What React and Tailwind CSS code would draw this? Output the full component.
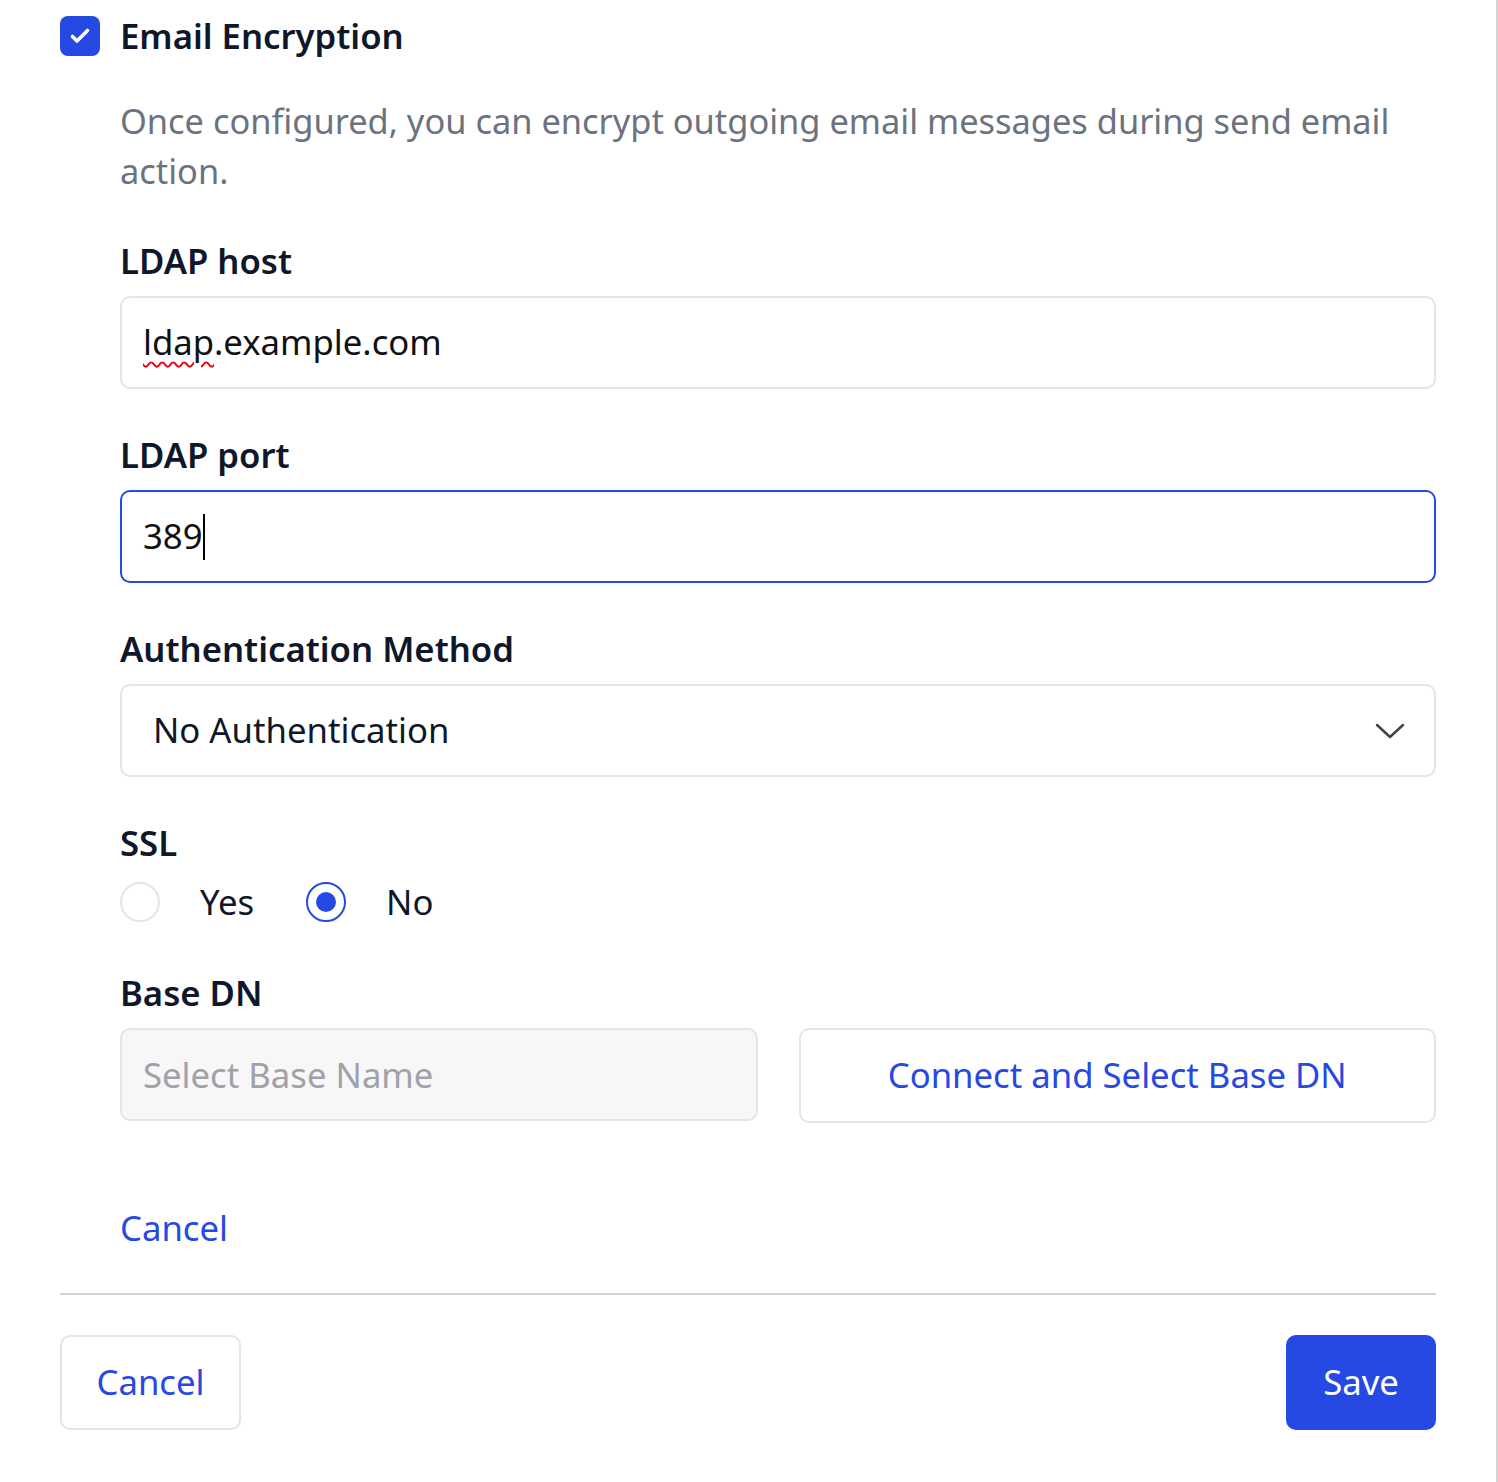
import React, { useState } from "react";

function Label({ children }) {
  return (
    <div className="text-[34.7px] leading-[44px] font-semibold text-[#0f172a] mb-[13px]">
      {children}
    </div>
  );
}

function Radio({ checked, label, onClick }) {
  return (
    <button onClick={onClick} className="flex items-center h-[44px]">
      <span
        className={
          checked
            ? "w-[40px] h-[40px] rounded-full border-2 border-[#2649e3] flex items-center justify-center"
            : "w-[40px] h-[40px] rounded-full border-2 border-[#e5e5e5] flex items-center justify-center"
        }
      >
        {checked && <span className="w-[20px] h-[20px] rounded-full bg-[#2649e3]" />}
      </span>
      <span className="ml-[40px] text-[34.7px] text-[#0f172a]">{label}</span>
    </button>
  );
}

export default function App() {
  const [ssl, setSsl] = useState(false);

  return (
    <div className="w-[1498px] h-[1482px] bg-white border-r-2 border-[#d4d4d8] font-['Noto_Sans',sans-serif] overflow-hidden">
      <div className="pl-[60px] pr-[60px] pt-[16px]">
        {/* checkbox heading */}
        <div className="flex items-center h-[40px]">
          <span className="w-[40px] h-[40px] rounded-[8px] bg-[#2649e3] flex items-center justify-center">
            <svg width="24" height="24" viewBox="0 0 24 24" fill="none">
              <path d="M4.5 12.5l4.5 4.5L19.5 6.5" stroke="white" strokeWidth="3.6" strokeLinecap="round" strokeLinejoin="round" />
            </svg>
          </span>
          <span className="ml-[20px] text-[34.7px] font-semibold text-[#0f172a]">Email Encryption</span>
        </div>

        <div className="pl-[60px]">
          <p className="mt-[40px] text-[34.4px] leading-[50px] text-[#6b7280]">
            Once configured, you can encrypt outgoing email messages during send email action.
          </p>

          <div className="mt-[43px]">
            <Label>LDAP host</Label>
            <div className="h-[93px] rounded-[10px] border-2 border-[#e5e5e5] flex items-center px-[21px] text-[34.7px] text-[#111]">
              <span className="underline decoration-wavy decoration-red-600 decoration-[1.5px] underline-offset-[6px]">ldap</span>
              <span>.example.com</span>
            </div>
          </div>

          <div className="mt-[44px]">
            <Label>LDAP port</Label>
            <div className="h-[93px] rounded-[10px] border-2 border-[#2649e3] flex items-center px-[21px] text-[34.7px] text-[#111]">
              <span>389</span>
              <span className="w-[2px] h-[46px] bg-black" />
            </div>
          </div>

          <div className="mt-[44px]">
            <Label>Authentication Method</Label>
            <div className="h-[93px] rounded-[10px] border-2 border-[#e5e5e5] flex items-center justify-between pl-[31px] pr-[28px] text-[34.7px] text-[#0f172a]">
              <span>No Authentication</span>
              <svg width="32" height="18" viewBox="0 0 32 18" fill="none">
                <path d="M3 3l13 12L29 3" stroke="#444" strokeWidth="2.5" strokeLinecap="round" strokeLinejoin="round" />
              </svg>
            </div>
          </div>

          <div className="mt-[44px]">
            <div className="text-[34.7px] leading-[44px] font-semibold text-[#0f172a]">SSL</div>
            <div className="flex items-center gap-[52px] mt-[15px]">
              <Radio checked={ssl} label="Yes" onClick={() => setSsl(true)} />
              <Radio checked={!ssl} label="No" onClick={() => setSsl(false)} />
            </div>
          </div>

          <div className="mt-[47px]">
            <Label>Base DN</Label>
            <div className="grid grid-cols-2 gap-[41px]">
              <input
                disabled
                placeholder="Select Base Name"
                className="h-[93px] rounded-[10px] border-2 border-[#e5e5e5] bg-[#f7f7f7] px-[21px] text-[34.7px] placeholder:text-[#a1a1aa]"
              />
              <button className="h-[95px] rounded-[10px] border-2 border-[#e5e5e5] text-[34.7px] text-[#2649e3]">
                Connect and Select Base DN
              </button>
            </div>
          </div>

          <button className="mt-[80px] text-[34.7px] leading-[50px] text-[#2649e3]">Cancel</button>
        </div>

        <div className="mt-[40px] h-[2px] bg-[#d4d4d8]" />

        <div className="mt-[40px] flex justify-between">
          <button className="w-[181px] h-[95px] rounded-[10px] border-2 border-[#e5e5e5] text-[34.7px] text-[#2649e3]">
            Cancel
          </button>
          <button className="w-[150px] h-[95px] rounded-[10px] bg-[#2649e3] text-[34.7px] text-white">
            Save
          </button>
        </div>
      </div>
    </div>
  );
}
